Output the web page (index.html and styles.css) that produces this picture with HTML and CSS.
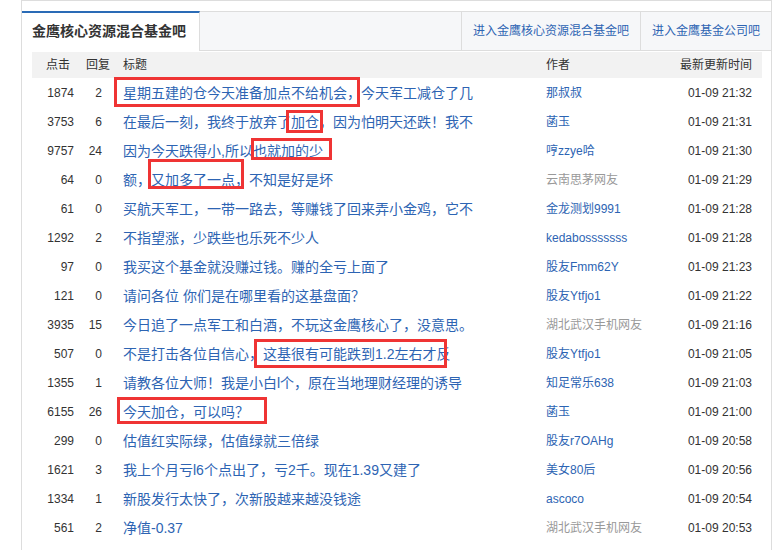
FILE: index.html
```html
<!DOCTYPE html>
<html lang="zh-CN">

<head>
    <meta charset="UTF-8">
    <title>金鹰核心资源混合基金吧</title>
    <link rel="stylesheet" href="styles.css">
</head>

<body>
    <div class="frame">
        <div class="tabbar">
            <div class="tab-active">金鹰核心资源混合基金吧</div>
            <div class="tab-space"></div>
            <a class="tab-link" href="#">进入金鹰核心资源混合基金吧</a>
            <a class="tab-link" href="#">进入金鹰基金公司吧</a>
        </div>

        <div class="list">
            <div class="row head">
                <span class="c-click">点击</span>
                <span class="c-reply">回复</span>
                <span class="c-title">标题</span>
                <span class="c-author">作者</span>
                <span class="c-time">最新更新时间</span>
            </div>
            <div class="row">
                <span class="c-click">1874</span><span class="c-reply">2</span>
                <a class="c-title" href="#">星期五建的仓今天准备加点不给机会，今天军工减仓了几</a>
                <a class="c-author" href="#">那叔叔</a><span class="c-time">01-09 21:32</span>
            </div>
            <div class="row">
                <span class="c-click">3753</span><span class="c-reply">6</span>
                <a class="c-title" href="#">在最后一刻，我终于放弃了加仓，因为怕明天还跌！我不</a>
                <a class="c-author" href="#">菡玉</a><span class="c-time">01-09 21:31</span>
            </div>
            <div class="row">
                <span class="c-click">9757</span><span class="c-reply">24</span>
                <a class="c-title" href="#">因为今天跌得小,所以也就加的少</a>
                <a class="c-author" href="#">哼zzye哈</a><span class="c-time">01-09 21:30</span>
            </div>
            <div class="row">
                <span class="c-click">64</span><span class="c-reply">0</span>
                <a class="c-title" href="#">额，又加多了一点，不知是好是坏</a>
                <span class="c-author guest">云南思茅网友</span><span class="c-time">01-09 21:29</span>
            </div>
            <div class="row">
                <span class="c-click">61</span><span class="c-reply">0</span>
                <a class="c-title" href="#">买航天军工，一带一路去，等赚钱了回来弄小金鸡，它不</a>
                <a class="c-author" href="#">金龙测划9991</a><span class="c-time">01-09 21:28</span>
            </div>
            <div class="row">
                <span class="c-click">1292</span><span class="c-reply">2</span>
                <a class="c-title" href="#">不指望涨，少跌些也乐死不少人</a>
                <a class="c-author" href="#">kedabosssssss</a><span class="c-time">01-09 21:28</span>
            </div>
            <div class="row">
                <span class="c-click">97</span><span class="c-reply">0</span>
                <a class="c-title" href="#">我买这个基金就没赚过钱。赚的全亏上面了</a>
                <a class="c-author" href="#">股友Fmm62Y</a><span class="c-time">01-09 21:23</span>
            </div>
            <div class="row">
                <span class="c-click">121</span><span class="c-reply">0</span>
                <a class="c-title" href="#">请问各位 你们是在哪里看的这基盘面？</a>
                <a class="c-author" href="#">股友Ytfjo1</a><span class="c-time">01-09 21:22</span>
            </div>
            <div class="row">
                <span class="c-click">3935</span><span class="c-reply">15</span>
                <a class="c-title" href="#">今日追了一点军工和白酒，不玩这金鹰核心了，没意思。</a>
                <span class="c-author guest">湖北武汉手机网友</span><span class="c-time">01-09 21:16</span>
            </div>
            <div class="row">
                <span class="c-click">507</span><span class="c-reply">0</span>
                <a class="c-title" href="#">不是打击各位自信心，这基很有可能跌到1.2左右才反</a>
                <a class="c-author" href="#">股友Ytfjo1</a><span class="c-time">01-09 21:05</span>
            </div>
            <div class="row">
                <span class="c-click">1355</span><span class="c-reply">1</span>
                <a class="c-title" href="#">请教各位大师！我是小白l个，原在当地理财经理的诱导</a>
                <a class="c-author" href="#">知足常乐638</a><span class="c-time">01-09 21:03</span>
            </div>
            <div class="row">
                <span class="c-click">6155</span><span class="c-reply">26</span>
                <a class="c-title" href="#">今天加仓，可以吗？</a>
                <a class="c-author" href="#">菡玉</a><span class="c-time">01-09 21:00</span>
            </div>
            <div class="row">
                <span class="c-click">299</span><span class="c-reply">0</span>
                <a class="c-title" href="#">估值红实际绿，估值绿就三倍绿</a>
                <a class="c-author" href="#">股友r7OAHg</a><span class="c-time">01-09 20:58</span>
            </div>
            <div class="row">
                <span class="c-click">1621</span><span class="c-reply">3</span>
                <a class="c-title" href="#">我上个月亏l6个点出了，亏2千。现在1.39又建了</a>
                <a class="c-author" href="#">美女80后</a><span class="c-time">01-09 20:56</span>
            </div>
            <div class="row">
                <span class="c-click">1334</span><span class="c-reply">1</span>
                <a class="c-title" href="#">新股发行太快了，次新股越来越没钱途</a>
                <a class="c-author" href="#">ascoco</a><span class="c-time">01-09 20:54</span>
            </div>
            <div class="row">
                <span class="c-click">561</span><span class="c-reply">2</span>
                <a class="c-title" href="#">净值-0.37</a>
                <span class="c-author guest">湖北武汉手机网友</span><span class="c-time">01-09 20:53</span>
            </div>
            <div class="row">
                <span class="c-click">436</span><span class="c-reply">1</span>
                <a class="c-title" href="#">大家都加仓了吗</a>
                <a class="c-author" href="#">股友Ytfjo1</a><span class="c-time">01-09 20:51</span>
            </div>
        </div>
    </div>

    <!-- red marks drawn over the screenshot -->
    <div class="mark" style="left:114px;top:77px;width:246px;height:30px"></div>
    <div class="mark" style="left:286px;top:110px;width:37px;height:23px"></div>
    <div class="mark" style="left:251px;top:138px;width:81px;height:22px"></div>
    <div class="mark" style="left:148px;top:159px;width:96px;height:30px"></div>
    <div class="mark" style="left:254px;top:339px;width:193px;height:29px"></div>
    <div class="mark" style="left:117px;top:397px;width:150px;height:27px"></div>
</body>

</html>
```

FILE: styles.css
```css
body {
    margin: 0;
    font-family: "Liberation Sans", "Noto Sans CJK SC", sans-serif;
    font-size: 12px;
    color: #333;
    background: #fff;
    overflow: hidden;
}

a {
    color: #2d64b3;
    text-decoration: none;
}

.frame {
    margin-left: 21px;
    width: 749px;
    height: 600px;
    border: 1px solid #ddd;
    border-bottom: none;
    padding-top: 10px;
}

.tabbar {
    display: flex;
    height: 38px;
    background: #f6f7f9;
    border-top: 1px solid #ddd;
    border-bottom: 1px solid #ddd;
}

.tab-active {
    width: 167px;
    margin: -1px 0;
    padding-left: 10px;
    background: #fff;
    border-top: 2px solid #2a6bb6;
    border-right: 1px solid #ddd;
    font-size: 14px;
    font-weight: bold;
    line-height: 36px;
    color: #333;
}

.tab-space {
    flex: 1;
}

.tab-link {
    padding: 0 11px;
    border-left: 1px solid #ddd;
    line-height: 38px;
    font-size: 12px;
}

.list {
    padding: 1px 9px 0 10px;
}

.row {
    display: grid;
    grid-template-columns: 48px 36px 424px 130px 1fr;
    align-items: center;
    height: 29px;
    line-height: 16px;
    white-space: nowrap;
}

.row.head {
    height: 26px;
    background: #f2f2f2;
}

.c-click {
    text-align: right;
    padding-right: 6px;
}

.c-reply {
    text-align: right;
    padding-right: 14px;
}

.c-title {
    padding-left: 7px;
    font-size: 14px;
    overflow: hidden;
}

.c-author {
    padding-left: 6px;
}

.c-author.guest {
    color: #999;
}

.c-time {
    text-align: right;
    padding-right: 10px;
}

.head .c-click {
    text-align: left;
    padding: 0 0 0 14px;
}

.head .c-reply {
    text-align: left;
    padding: 0 0 0 6px;
}

.head .c-title {
    font-size: 12px;
}

.mark {
    position: absolute;
    box-sizing: border-box;
    border: 3px solid #ef3434;
}
```
